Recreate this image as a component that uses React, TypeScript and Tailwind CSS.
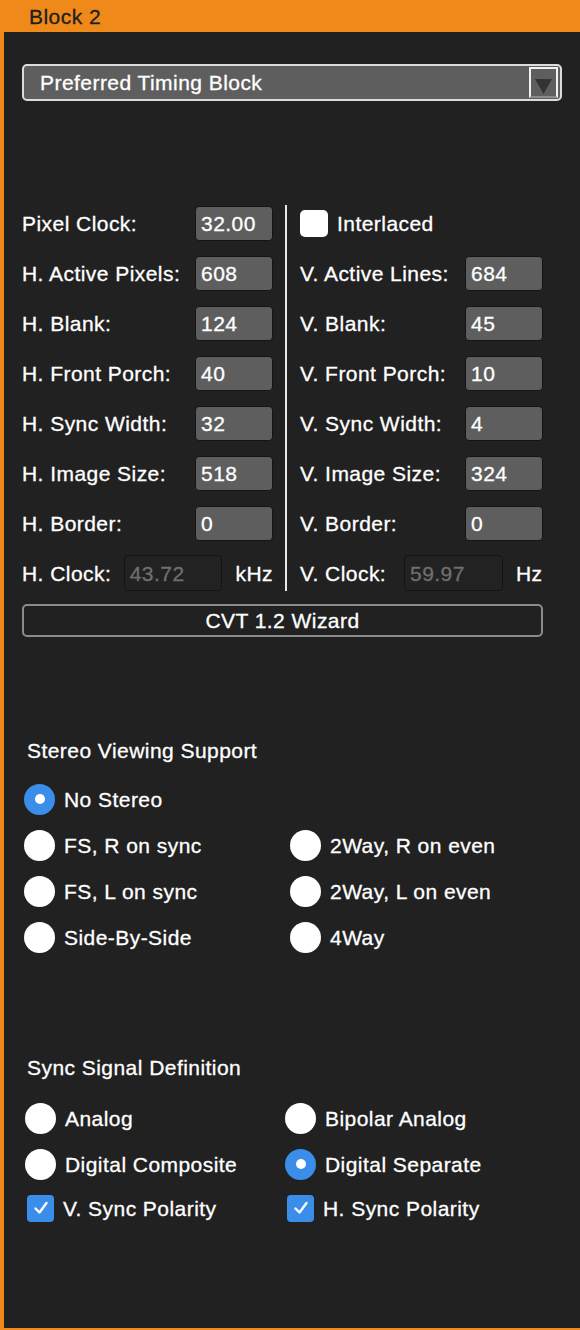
import React from "react";

const font = { fontFamily: '"Liberation Sans", Arial, Helvetica, sans-serif' };

function Field({ label, value }: { label: string; value: string }) {
  return (
    <div className="flex items-center h-[50px]">
      <span className="flex-1 text-white">{label}</span>
      <div className="w-[78px] h-[35px] bg-[#5e5e5e] border border-[#141414] rounded-[4px] flex items-center pl-[5px] text-white">
        {value}
      </div>
    </div>
  );
}

function ClockRow({ label, value, unit, labelW }: { label: string; value: string; unit: string; labelW: string }) {
  return (
    <div className="flex items-center h-[50px]">
      <span className={`${labelW} text-white`}>{label}</span>
      <div className="w-[99px] h-[36px] bg-[#222222] border border-[#141414] rounded-[4px] flex items-center pl-[5px] text-[#6f6f6f]">
        {value}
      </div>
      <span className="ml-[13px] text-white">{unit}</span>
    </div>
  );
}

function Radio({ label, checked }: { label: string; checked?: boolean }) {
  return (
    <div className="flex items-center h-[46px]">
      {checked ? (
        <div className="w-[31px] h-[31px] rounded-full bg-[#3a8eea] flex items-center justify-center">
          <div className="w-[10px] h-[10px] rounded-full bg-white" />
        </div>
      ) : (
        <div className="w-[31px] h-[31px] rounded-full bg-white" />
      )}
      <span className="ml-[9px] text-white">{label}</span>
    </div>
  );
}

function Check({ label }: { label: string }) {
  return (
    <div className="flex items-center h-[42px]">
      <div className="w-[27px] h-[27px] rounded-[4px] bg-[#3a8eea] flex items-center justify-center">
        <svg width="18" height="18" viewBox="0 0 18 18">
          <path d="M3.5 9.5 L7.5 13.5 L14.5 4" stroke="white" strokeWidth="2.4" fill="none" strokeLinecap="round" strokeLinejoin="round" />
        </svg>
      </div>
      <span className="ml-[9px] text-white">{label}</span>
    </div>
  );
}

export default function App() {
  return (
    <div style={font} className="w-[580px] h-[1330px] bg-[#ef8a1a] flex flex-col text-[21px] leading-none tracking-[0.45px] [-webkit-text-stroke:0.3px_currentColor]">
      <div className="h-[32px] flex items-center pl-[29px] text-[#1e1e1e]">Block 2</div>
      <div className="flex-1 ml-[4px] mb-[2px] bg-[#212121] pl-[18px] pr-[18px] flex flex-col">
        {/* Dropdown */}
        <div className="mt-[32px] h-[37px] border-2 border-[#dcdcdc] rounded-[5px] bg-[#5e5e5e] flex items-center justify-between pl-[16px] pr-[2px]">
          <span className="text-white">Preferred Timing Block</span>
          <div className="w-[29px] h-[31px] border-2 border-[#f2f2f2] border-b-[#8a8a8a] flex items-end justify-center pb-[2px]">
            <svg width="17" height="15" viewBox="0 0 17 15">
              <polygon points="0,0 17,0 8.5,15" fill="#333333" />
            </svg>
          </div>
        </div>

        {/* Timing fields */}
        <div className="mt-[97px] flex">
          <div className="w-[251px] flex flex-col">
            <Field label="Pixel Clock:" value="32.00" />
            <Field label="H. Active Pixels:" value="608" />
            <Field label="H. Blank:" value="124" />
            <Field label="H. Front Porch:" value="40" />
            <Field label="H. Sync Width:" value="32" />
            <Field label="H. Image Size:" value="518" />
            <Field label="H. Border:" value="0" />
            <ClockRow label="H. Clock:" value="43.72" unit="kHz" labelW="w-[102px]" />
          </div>
          <div className="ml-[12px] w-[2px] my-[7px] bg-[#e8e8e8]" />
          <div className="ml-[13px] w-[243px] flex flex-col">
            <div className="flex items-center h-[50px]">
              <div className="w-[28px] h-[27px] bg-white rounded-[5px]" />
              <span className="ml-[9px] text-white">Interlaced</span>
            </div>
            <Field label="V. Active Lines:" value="684" />
            <Field label="V. Blank:" value="45" />
            <Field label="V. Front Porch:" value="10" />
            <Field label="V. Sync Width:" value="4" />
            <Field label="V. Image Size:" value="324" />
            <Field label="V. Border:" value="0" />
            <ClockRow label="V. Clock:" value="59.97" unit="Hz" labelW="w-[104px]" />
          </div>
        </div>

        {/* CVT button */}
        <div className="mt-[6px] w-[521px] h-[33px] border-2 border-[#8c8c8c] rounded-[5px] flex items-center justify-center text-white">
          CVT 1.2 Wizard
        </div>

        {/* Stereo */}
        <div className="mt-[103px] pl-[5px] text-white">Stereo Viewing Support</div>
        <div className="mt-[15px] pl-[2px] grid grid-cols-[266px_1fr]">
          <Radio label="No Stereo" checked />
          <div />
          <Radio label="FS, R on sync" />
          <Radio label="2Way, R on even" />
          <Radio label="FS, L on sync" />
          <Radio label="2Way, L on even" />
          <Radio label="Side-By-Side" />
          <Radio label="4Way" />
        </div>

        {/* Sync */}
        <div className="mt-[97px] pl-[5px] text-white">Sync Signal Definition</div>
        <div className="mt-[17px] pl-[3px] grid grid-cols-[260px_1fr]">
          <Radio label="Analog" />
          <Radio label="Bipolar Analog" />
          <Radio label="Digital Composite" />
          <Radio label="Digital Separate" checked />
          <div className="pl-[2px]"><Check label="V. Sync Polarity" /></div>
          <div className="pl-[2px]"><Check label="H. Sync Polarity" /></div>
        </div>
      </div>
    </div>
  );
}
